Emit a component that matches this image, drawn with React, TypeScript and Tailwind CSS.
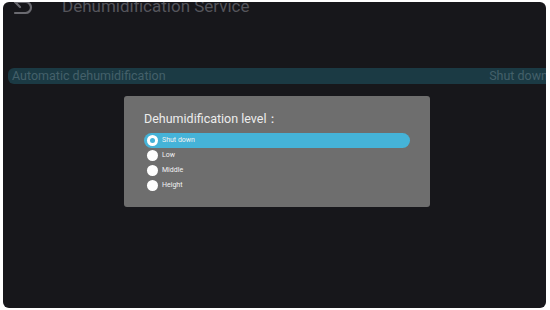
import React from "react";

function Radio({ selected }: { selected?: boolean }) {
  return (
    <span className="flex h-[11px] w-[11px] items-center justify-center rounded-full bg-white">
      {selected && <span className="h-[5px] w-[5px] rounded-full bg-[#45b3d8]" />}
    </span>
  );
}

export default function App() {
  const options = ["Shut down", "Low", "Middle", "Height"];
  return (
    <div className="h-[310px] w-[550px] bg-white pb-[2px] pl-[3px] pr-[4px] pt-[2px]" style={{ fontFamily: "Roboto, 'Noto Sans', sans-serif" }}>
      <div className="relative flex h-full flex-col overflow-hidden rounded-[6px] bg-[#17171b]">
        <div className="-mt-[8px] flex h-[22px] items-center">
          <svg width="24" height="24" viewBox="0 0 24 24" fill="none" stroke="#6a6a70" strokeWidth="2.2" strokeLinecap="round" strokeLinejoin="round" className="-mt-[1px] ml-[8px] shrink-0">
            <path d="M9 14 4 9l5-5" />
            <path d="M4 9h10.5a5.5 5.5 0 0 1 5.5 5.5 5.5 5.5 0 0 1-5.5 5.5H4" />
          </svg>
          <span className="ml-[27px] mt-[3px] text-[17px] leading-none text-[#55555b]">Dehumidification Service</span>
        </div>
        <div className="ml-[5px] mt-[52px] flex h-[16px] items-center justify-between rounded-l-[6px] bg-[#1b3a44] pl-[4px] text-[12.5px] text-[#44606a]">
          <span>Automatic dehumidification</span>
          <span className="-mr-[2px] whitespace-nowrap">Shut down</span>
        </div>
        <div className="absolute left-[121px] top-[94px] flex h-[111px] w-[306px] flex-col rounded-[3px] bg-[#6e6e6e] pl-[20px] pr-[20px] pt-[15px]">
          <div className="text-[12.5px] leading-[15px] text-[#ececec]">Dehumidification level：</div>
          <div className="mt-[7px] flex flex-col">
            {options.map((o, i) => (
              <div key={o} className={`flex h-[15px] items-center gap-[4px] rounded-full pl-[3px] text-[7px] text-[#f2f2f2] ${i === 0 ? "bg-[#45b3d8]" : ""}`}>
                <Radio selected={i === 0} />
                <span>{o}</span>
              </div>
            ))}
          </div>
        </div>
      </div>
    </div>
  );
}
